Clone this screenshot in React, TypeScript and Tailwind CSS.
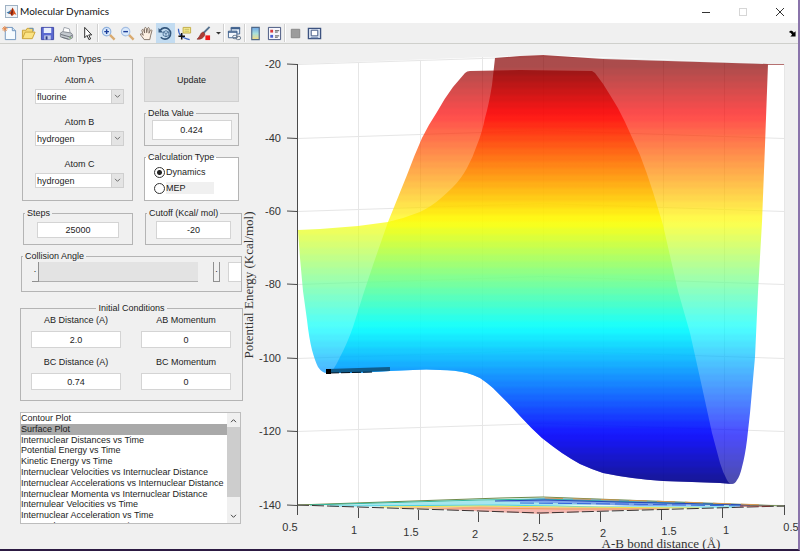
import type { ReactNode } from 'react'

const ATOMS = ['fluorine', 'hydrogen', 'chlorine', 'iodine']

const PLOT_TYPES = [
  'Contour Plot',
  'Surface Plot',
  'Internuclear Distances vs Time',
  'Potential Energy vs Time',
  'Kinetic Energy vs Time',
  'Internuclear Velocities vs Internuclear Distance',
  'Internuclear Accelerations vs Internuclear Distance',
  'Internuclear Momenta vs Internuclear Distance',
  'Internulear Velocities vs Time',
  'Internuclear Acceleration vs Time',
  'Internuclear Momenta vs Time',
]

const Z_TICKS = [
  { label: '-20', y: 64 },
  { label: '-40', y: 138 },
  { label: '-60', y: 211 },
  { label: '-80', y: 284 },
  { label: '-100', y: 358 },
  { label: '-120', y: 431 },
  { label: '-140', y: 505 },
]

const X_TICKS = [
  { label: '0.5', x: 297, y: 505, tx: 290, ty: 531 },
  { label: '1', x: 358, y: 508, tx: 354, ty: 534 },
  { label: '1.5', x: 418, y: 510, tx: 411, ty: 536 },
  { label: '2', x: 478, y: 512, tx: 475, ty: 538 },
  { label: '2.52.5', x: 539, y: 514, tx: 538, ty: 541 },
  { label: '2', x: 600, y: 512, tx: 603, ty: 537 },
  { label: '1.5', x: 661, y: 510, tx: 669, ty: 535 },
  { label: '1', x: 722, y: 508, tx: 726, ty: 534 },
  { label: '0.5', x: 784, y: 505, tx: 791, ty: 531 },
]

const GRID_X = [
  { x: 358, top: 62, bottom: 503 },
  { x: 420, top: 60, bottom: 501 },
  { x: 482, top: 57, bottom: 499 },
  { x: 543, top: 55, bottom: 497 },
  { x: 603, top: 58, bottom: 499 },
  { x: 663, top: 60, bottom: 501 },
  { x: 724, top: 62, bottom: 503 },
]

const LEVELS = 64

const channel = (v: number) => Math.round(255 * Math.min(1, Math.max(0, v)))

// jet colormap, 0 = dark blue, 1 = dark red
const jet = (v: number) =>
  `rgb(${channel(1.5 - Math.abs(4 * v - 3))},${channel(1.5 - Math.abs(4 * v - 2))},${channel(1.5 - Math.abs(4 * v - 1))})`

const BANDS = Array.from({ length: LEVELS }, (_, i) => ({
  from: (i + 0.3) / LEVELS,
  to: (i + 0.7) / LEVELS,
  color: jet(1 - (i + 0.5) / LEVELS),
}))

const FLOOR_EDGE =
  'L720 483 L692 482 L663 481 Q632 479 603 473 Q591 469 580 464 Q571 459 562 453 Q552 446 542 438 Q531 428 520 416 L507 402 L493 388 Q486 382 480 378 Q474 375 467 373 Q455 370 440 370 Q426 369 413 370 L390 371 L357 373'

const BACK_SURFACE = `M298 230 L320 229 L358 226 L388 222 Q405 218 420 212 Q432 206 440 199 Q447 193 453 187 Q461 179 467 168 Q473 157 477 145 Q482 133 485 118 Q489 104 492 85 L495 58 L520 56 L543 55 L603 59 L768 64 L765 145 L762 222 L758 292 L755 357 L750 413 L747 440 Q745 456 742 467 Q740 476 737 480 Q735 484 732 484 ${FLOOR_EDGE} L327 373 Q322 373 318 367 Q315 361 312 350 Q309 338 307 320 L303 291 L300 258 Z`

const FRONT_SURFACE = `M329 373 Q333 372 340 357 Q347 344 353 327 L364 292 L373 265 L388 222 L407 175 Q414 156 422 138 Q429 124 437 112 Q444 99 453 87 L465 73 Q467 71 470 71 L520 70 L592 71 L595 73 Q603 83 610 95 Q618 107 625 122 L640 155 Q647 173 653 192 L663 225 L678 291 L690 333 L702 387 L712 433 L720 463 Q723 473 727 480 Q729 484 732 484 ${FLOOR_EDGE} Z`

const Panel = ({
  title,
  className = '',
  legendClass = 'ml-px',
  children,
}: {
  title: string
  className?: string
  legendClass?: string
  children: ReactNode
}) => (
  <fieldset className={`min-w-0 border border-[#b4b4b4] ${className}`}>
    <legend className={`px-0.5 ${legendClass}`}>{title}</legend>
    {children}
  </fieldset>
)

const TextField = ({
  label,
  value,
  className = '',
}: {
  label: string
  value: string
  className?: string
}) => (
  <input
    type="text"
    aria-label={label}
    defaultValue={value}
    className={`block border border-[#d4d4d4] bg-white text-center ${className}`}
  />
)

const AtomSelect = ({ name, value }: { name: string; value: string }) => (
  <label className="flex flex-col gap-[3px]">
    <span className="text-center">{name}</span>
    <span className="relative block">
      <select
        defaultValue={value}
        className="block h-[15px] w-full appearance-none border border-[#d4d4d4] bg-white pl-px"
      >
        {ATOMS.map((atom) => (
          <option key={atom}>{atom}</option>
        ))}
      </select>
      <span className="pointer-events-none absolute inset-y-0 right-0 flex w-[13px] items-center justify-center border border-[#cfcfcf] bg-[#e4e4e4]">
        <svg viewBox="0 0 8 6" className="h-[5px] w-[7px]">
          <path d="M1 1l3 3 3-3" fill="none" stroke="#555" />
        </svg>
      </span>
    </span>
  </label>
)

const Condition = ({ label, value }: { label: string; value: string }) => (
  <label className="flex flex-col gap-[5px] text-center">
    {label}
    <input
      type="text"
      defaultValue={value}
      className="h-[17px] w-full border border-[#d4d4d4] bg-white text-center"
    />
  </label>
)

const Choice = ({
  label,
  checked,
  className = '',
}: {
  label: string
  checked?: boolean
  className?: string
}) => (
  <label className="flex h-3 items-center gap-px">
    <input
      type="radio"
      name="calculation"
      defaultChecked={checked}
      className="size-[11px] shrink-0 appearance-none rounded-full border border-[#333] bg-white checked:bg-[radial-gradient(circle,#222_0_2px,#fff_3px)]"
    />
    <span className={className}>{label}</span>
  </label>
)

const Tool = ({
  label,
  active,
  children,
}: {
  label: string
  active?: boolean
  children: ReactNode
}) => (
  <button
    type="button"
    aria-label={label}
    className={`flex w-[19px] shrink-0 items-center justify-center ${active ? 'bg-[#c3dcf1]' : ''}`}
  >
    <svg viewBox="0 0 16 16" className="size-[15px]" fill="none">
      {children}
    </svg>
  </button>
)

const Divider = () => (
  <span className="my-px w-0.5 shrink-0 border-l border-[#d0d0d0] bg-white" />
)

const TitleBar = () => (
  <header className="flex h-[23px] items-center bg-white pl-[5px]">
    <svg viewBox="0 0 13 13" className="size-[13px]">
      <rect x=".5" y=".5" width="12" height="12" fill="#eef3f8" stroke="#9fb2c4" />
      <path d="M1.500 7.500L4 6.500 6 4.500 5.500 9 4 9z" fill="#3a76a8" />
      <path d="M4 9L6 5.500 7.500 2.500 9 5 11.500 10 9.500 9 7 11 5.500 9z" fill="#d9531e" />
      <path d="M7.500 2.500L8 7 7 11 5.500 9z" fill="#7c1f12" />
    </svg>
    <h1 className="ml-0.5 font-[Lato,'Open_Sans',sans-serif] text-[10px] text-[#111]">
      Molecular Dynamics
    </h1>
    <div className="ml-auto flex h-full">
      <button type="button" aria-label="Minimize" className="flex w-[37px] items-center justify-center">
        <svg viewBox="0 0 10 10" className="size-2.5">
          <path d="M1 5.500h8" stroke="#333" />
        </svg>
      </button>
      <button type="button" aria-label="Maximize" className="flex w-[37px] items-center justify-center">
        <svg viewBox="0 0 10 10" className="size-2.5">
          <rect x="1.500" y="1.500" width="7" height="7" fill="none" stroke="#d6d6d6" />
        </svg>
      </button>
      <button type="button" aria-label="Close" className="flex w-[37px] items-center justify-center">
        <svg viewBox="0 0 10 10" className="size-2.5">
          <path d="M1 1l8 8M9 1l-8 8" stroke="#333" />
        </svg>
      </button>
    </div>
  </header>
)

const Toolbar = () => (
  <div className="flex h-[21px] border-b border-[#cfd0cc] bg-[#f0f0f0]">
    <Tool label="New Figure">
      <path d="M3.500 1.500h7.500l3.500 3.500v9.500h-11z" fill="#f6fbff" stroke="#6f93bd" />
      <path d="M11 1.500v3.500h3.500" stroke="#6f93bd" fill="#d3e4f4" />
      <path d="M3 0v6M0 3h6M1 1l4 4M5 1L1 5" stroke="#e98a4a" />
    </Tool>
    <Tool label="Open File">
      <path d="M1.500 13.500v-9h4l1-2h6v4" fill="#f4d774" stroke="#c9a135" />
      <path d="M1.500 13.500l3-7h10.500l-3 7z" fill="#fbe384" stroke="#c9a135" />
      <path d="M9 2.500h4v3" stroke="#5e8fc0" />
    </Tool>
    <Tool label="Save Figure">
      <path d="M1.500 1.500h13v13h-13z" fill="#5a68d0" stroke="#3f49a8" />
      <path d="M4 2h8v5.500H4z" fill="#e8eefc" />
      <path d="M4.500 10h7v4.500h-7z" fill="#c3cbe9" />
      <path d="M6 11h2v3.500H6z" fill="#2d3a84" />
    </Tool>
    <Tool label="Print Figure">
      <path d="M4 7L5.500 1.500 11 3l1 5z" fill="#fff" stroke="#9a9fa8" />
      <path d="M1.500 7.500L4 6l9 1.500 1.500 2v3L11 14.500l-9.500-3z" fill="#c4c9cf" stroke="#858a92" />
      <path d="M2 9l9 2.500L14 10M3 12l7 2" stroke="#6b7078" />
      <path d="M11 12.500h2" stroke="#6bb04a" />
    </Tool>
    <Divider />
    <Tool label="Edit Plot">
      <path d="M5 1.500v11l2.500-2.500 2 4.500 1.800-.8-2-4.200h3.200z" fill="#fff" stroke="#222" />
    </Tool>
    <Divider />
    <Tool label="Zoom In">
      <path d="M9.500 9.500l5 5" stroke="#d9aa70" strokeWidth="2.500" />
      <circle cx="6" cy="6" r="4.500" fill="#dbeafb" stroke="#8fb0dc" strokeWidth="1.200" />
      <path d="M6 3.500v5M3.500 6h5" stroke="#1d3f9a" strokeWidth="1.500" />
    </Tool>
    <Tool label="Zoom Out">
      <path d="M9.500 9.500l5 5" stroke="#d9aa70" strokeWidth="2.500" />
      <circle cx="6" cy="6" r="4.500" fill="#dbeafb" stroke="#a5bee2" strokeWidth="1.200" />
      <path d="M3.500 6h5" stroke="#1d3f9a" strokeWidth="1.500" />
    </Tool>
    <Tool label="Pan">
      <path
        d="M5.500 14.500C4 12 2 10.500 1.500 8.500c.8-.8 2 0 3 1.500L3 4.500c.5-1.300 1.700-1 2 0l1 3L5.800 2.500c.4-1.300 1.800-1.200 2 0l.4 4.700.9-4.700c.5-1.200 1.800-.9 1.800.2l-.3 5 1.500-3.200c.8-.9 1.900-.3 1.600.8l-1.400 5.200-.8 4z"
        fill="#fdf1e3"
        stroke="#746457"
        strokeWidth=".9"
      />
    </Tool>
    <Tool label="Rotate 3D" active>
      <path d="M2.500 4.500A6 6 0 1 1 3 12" stroke="#34577d" strokeWidth="1.800" />
      <path d="M.5 2v5h5z" fill="#34577d" />
      <path d="M5.500 6.500l3-1.500 3 1.500v3.500l-3 1.500-3-1.500zM5.500 6.500l3 1.500 3-1.500M8.500 8v3.500" stroke="#42688f" strokeWidth=".9" />
    </Tool>
    <Tool label="Data Cursor">
      <path d="M6.500 1.500h8v6h-8z" fill="#f7ee8e" stroke="#c1ab45" />
      <path d="M8 3.500h5M8 5.500h5" stroke="#a99b56" strokeWidth=".7" />
      <path d="M1.500 3c0 7 4 9.500 12 11.500" stroke="#3d67c6" strokeWidth="1.300" />
      <path d="M5 7.500v7M1.500 11h7" stroke="#111" strokeWidth="1.600" />
    </Tool>
    <Tool label="Brush">
      <path d="M14.500 1L8 7.500" stroke="#57728f" strokeWidth="2" />
      <path d="M8 6.500C4.500 6.500 5 11 1 14c4 .8 8-1.500 8.500-5.500z" fill="#ad3c35" stroke="#77302c" strokeWidth=".6" />
      <path d="M10 10h5v5h-5z" fill="#f01818" />
    </Tool>
    <button type="button" aria-label="Brush colors" className="flex w-2.5 items-center justify-center">
      <svg viewBox="0 0 5 4" className="h-1 w-[5px]">
        <path d="M0 1h5L2.500 3.500z" fill="#333" />
      </svg>
    </button>
    <Divider />
    <Tool label="Link Plot">
      <path d="M4.500 1.500h9v7h-9z" fill="#e7f0fa" stroke="#40618d" />
      <path d="M4 2.500h10" stroke="#40618d" strokeWidth="2" />
      <path d="M1.500 5.500h9v7h-9z" fill="#f4f8fd" stroke="#40618d" />
      <path d="M1 6.500h10" stroke="#40618d" strokeWidth="1.500" />
      <rect x="6" y="10" width="5" height="3.500" rx="1.700" stroke="#66788c" />
      <rect x="9.500" y="11" width="5" height="3.500" rx="1.700" stroke="#66788c" />
    </Tool>
    <Divider />
    <Tool label="Insert Colorbar">
      <defs>
        <linearGradient id="colorbar" x2="0" y2="1">
          <stop stopColor="#6fa6e6" />
          <stop offset=".5" stopColor="#a9e0dc" />
          <stop offset="1" stopColor="#f7dc7f" />
        </linearGradient>
      </defs>
      <path d="M4 1.500h8v13h-8z" fill="url(#colorbar)" stroke="#4f6888" strokeWidth="1.200" />
    </Tool>
    <Tool label="Insert Legend">
      <path d="M1.500 1.500h13v13h-13z" fill="#f6f6fc" stroke="#41517c" />
      <path d="M3.500 4h3v3h-3z" fill="#d8383a" />
      <path d="M3.500 9.500h3v3h-3z" fill="#4a5fd0" />
      <path d="M8.500 5h4.500M8.500 6.500h3M8.500 10.500h4.500M8.500 12h3" stroke="#555" />
    </Tool>
    <Divider />
    <Tool label="Hide Plot Tools">
      <path d="M3.500 3.500h9v9h-9z" fill="#9c9c9c" stroke="#858585" />
    </Tool>
    <Tool label="Show Plot Tools">
      <path d="M1.500 2.500h13v11h-13z" fill="#dce6f4" stroke="#3d5380" strokeWidth="1.400" />
      <path d="M4.500 4.500h7v6h-7z" fill="#fff" stroke="#3d5380" />
      <path d="M4 12.500h8" stroke="#6c84ad" />
    </Tool>
    <button type="button" aria-label="Dock Figure" className="mr-px ml-auto flex w-2.5 items-center justify-center">
      <svg viewBox="0 0 8 8" className="size-[7px]">
        <path d="M0 2.500C1.500 0 4 .5 5.500 3L7.500 1.500V7.500H1.500L3.500 5.500C2.500 3.500 1.500 3 0 2.500z" fill="#000" />
      </svg>
    </button>
  </div>
)

const Controls = () => (
  <aside className="w-[243px] shrink-0 pt-[9px] pl-5 text-[9px] leading-3 text-[#1c1c1c]">
    <div className="flex gap-[11px] pl-0.5">
      <Panel
        title="Atom Types"
        className="w-[111px]"
        legendClass="mx-auto"
      >
        <div className="flex flex-col gap-3 pt-[9px] pr-2 pb-[11px] pl-3">
          <AtomSelect name="Atom A" value="fluorine" />
          <AtomSelect name="Atom B" value="hydrogen" />
          <AtomSelect name="Atom C" value="hydrogen" />
        </div>
      </Panel>
      <div className="flex w-[95px] flex-col gap-[5px] pt-1">
        <button type="button" className="h-[45px] border border-[#d0d0d0] bg-[#e1e1e1]">
          Update
        </button>
        <Panel title="Delta Value">
          <TextField label="Delta Value" value="0.424" className="mx-auto mt-px mb-[5px] h-5 w-20" />
        </Panel>
        <Panel title="Calculation Type" className="bg-white">
          <div className="flex flex-col gap-1 pt-[3px] pb-1.5 pl-[9px]">
            <Choice label="Dynamics" checked />
            <Choice label="MEP" className="w-12 bg-[#f0f0f0]" />
          </div>
        </Panel>
      </div>
    </div>

    <div className="mt-1.5 flex gap-3 pl-[3px]">
      <Panel title="Steps" className="w-[110px]">
        <TextField label="Steps" value="25000" className="mx-auto mt-[3px] mb-1.5 h-4 w-[82px]" />
      </Panel>
      <Panel title="Cutoff (Kcal/ mol)" className="w-[97px]">
        <TextField label="Cutoff" value="-20" className="mx-auto mt-0.5 mb-[5px] h-[18px] w-[75px]" />
      </Panel>
    </div>

    <Panel title="Collision Angle" className="mt-[5px] ml-px w-[221px]">
      <div className="flex h-5 pl-2.5">
        <button type="button" aria-label="Decrease angle" className="w-[7px] border-r border-b border-[#909090] leading-none">
          ·
        </button>
        <input
          type="range"
          aria-label="Collision Angle"
          min={0}
          max={180}
          defaultValue={180}
          className="h-full min-w-0 flex-1 appearance-none border-b border-[#b0b0b0] bg-[#e3e3e3] [&::-webkit-slider-thumb]:h-5 [&::-webkit-slider-thumb]:w-[15px] [&::-webkit-slider-thumb]:appearance-none [&::-webkit-slider-thumb]:bg-[#f0f0f0]"
        />
        <button type="button" aria-label="Increase angle" className="w-[7px] border-x border-b border-[#909090] leading-none">
          ·
        </button>
        <input type="text" aria-label="Angle value" className="ml-2 w-[13px] border border-r-0 border-[#d4d4d4] bg-white" />
      </div>
      <div className="h-[9px]" />
    </Panel>

    <Panel title="Initial Conditions" className="mt-2.5" legendClass="mx-auto">
      <div className="grid grid-cols-2 gap-x-5 gap-y-2 pr-[11px] pb-2.5 pl-2.5">
        <Condition label="AB Distance (A)" value="2.0" />
        <Condition label="AB Momentum" value="0" />
        <Condition label="BC Distance (A)" value="0.74" />
        <Condition label="BC Momentum" value="0" />
      </div>
    </Panel>

    <div className="mt-[11px] mr-0.5 flex h-28 border border-[#bdbdbd] bg-white">
      <select
        size={10}
        aria-label="Plot type"
        defaultValue="Surface Plot"
        className="h-full min-w-0 flex-1 appearance-none overflow-hidden leading-[1.2]"
      >
        {PLOT_TYPES.map((plot) => (
          <option
            key={plot}
            className="p-0 leading-[1.2] text-[#1c1c1c] checked:bg-[linear-gradient(#a9a9a9,#a9a9a9)]"
          >
            {plot}
          </option>
        ))}
      </select>
      <div className="flex w-[13px] flex-col bg-[#f0f0f0]">
        <button type="button" aria-label="Scroll up" className="flex h-[14px] items-center justify-center">
          <svg viewBox="0 0 8 6" className="h-[5px] w-[7px]">
            <path d="M1 5l3-3 3 3" fill="none" stroke="#444" strokeWidth="1.200" />
          </svg>
        </button>
        <span className="h-[70px] bg-[#cdcdcd]" />
        <button type="button" aria-label="Scroll down" className="mt-auto flex h-[14px] items-center justify-center">
          <svg viewBox="0 0 8 6" className="h-[5px] w-[7px]">
            <path d="M1 1l3 3 3-3" fill="none" stroke="#444" strokeWidth="1.200" />
          </svg>
        </button>
      </div>
    </div>
  </aside>
)

const SurfacePlot = () => (
  <svg
    viewBox="243 44 555 505"
    role="img"
    aria-label="Potential energy surface"
    className="h-auto min-w-0 flex-1 self-start overflow-visible"
  >
    <defs>
      <linearGradient id="energy" gradientUnits="userSpaceOnUse" x1="0" y1="62" x2="0" y2="487">
        {BANDS.flatMap((band) => [
          <stop key={band.from} offset={band.from} stopColor={band.color} />,
          <stop key={band.to} offset={band.to} stopColor={band.color} />,
        ])}
      </linearGradient>
    </defs>

    <path d="M297 64L543 55L784 64V506L540 514L297 505z" fill="#fff" />

    <g stroke="#e6e6e6" fill="none">
      {GRID_X.map((line) => (
        <path key={line.x} d={`M${line.x}.5 ${line.top}V${line.bottom}`} />
      ))}
      {Z_TICKS.map((tick) => (
        <path key={tick.y} d={`M297 ${tick.y}.5L543 ${tick.y - 8}.5L784 ${tick.y}.5`} />
      ))}
      <path d="M784.500 64V505" />
    </g>

    {/* contour map projected on the floor */}
    <g>
      <path d="M297 505L500 498L543 497L784 506L540 514z" fill="#e9f6f4" />
      <path d="M340 505L500 500L640 503L520 507z" fill="#a5e6ee" />
      <path d="M430 509L480 506L540 507L670 508L540 514z" fill="#f5b5ae" />
      <path d="M495 501L545 498L620 500L765 505L640 506z" fill="#7fa5ea" />
      <g fill="none" strokeWidth="1">
        <path d="M297 505L500 498L543 497L784 506" stroke="#6d8a4a" />
        <path d="M310 505L480 500L540 499L770 506" stroke="#33b8a0" />
        <path d="M495 501L545 500L620 502L750 505" stroke="#2744b8" />
        <path d="M520 503L620 504L745 506" stroke="#3565dd" strokeDasharray="14 5" />
        <path d="M330 506L500 505L600 507L735 507" stroke="#4bd3e6" />
        <path d="M380 507L480 506L560 507L700 508" stroke="#f0e04e" />
        <path d="M400 508L480 508L560 509L670 509" stroke="#ef9c52" />
        <path d="M545 498L650 501L765 505" stroke="#d9974e" strokeDasharray="18 10" />
        <path d="M297 505L540 513L784 506" stroke="#3a3232" strokeDasharray="12 3" />
        <path d="M740 506L770 506" stroke="#a33" />
      </g>
    </g>

    <path d={BACK_SURFACE} fill="url(#energy)" fillOpacity=".7" />
    <path d={FRONT_SURFACE} fill="url(#energy)" fillOpacity=".7" />

    {/* trajectory */}
    <path d="M328 371L390 369" stroke="#0f5c8c" strokeWidth="4" />
    <path d="M330 373L373 372" stroke="#06121c" strokeDasharray="9 2" />
    <path d="M326 369h5v5h-5z" fill="#000" />

    <g stroke="#4a4a4a">
      <path d="M297.500 64V505" />
      {Z_TICKS.map((tick) => (
        <path key={tick.y} d={`M287 ${tick.y}L297 ${tick.y}.5`} />
      ))}
      {X_TICKS.map((tick) => (
        <path key={tick.x} d={`M${tick.x}.5 ${tick.y}v10`} />
      ))}
      <path d="M768 64.500H784" stroke="#b57070" />
    </g>

    <g fill="#333" fontSize="11" fontFamily="'Liberation Sans', Arial, sans-serif">
      {Z_TICKS.map((tick) => (
        <text key={tick.y} x="281" y={tick.y + 4} textAnchor="end">
          {tick.label}
        </text>
      ))}
      {X_TICKS.map((tick) => (
        <text key={tick.x} x={tick.tx} y={tick.ty} textAnchor="middle">
          {tick.label}
        </text>
      ))}
    </g>

    <g fill="#333" fontSize="13" fontFamily="'Liberation Serif', 'Times New Roman', serif" textAnchor="middle">
      <text x="661" y="548">
        A-B bond distance (Å)
      </text>
      <text transform="translate(253 285) rotate(-90)">Potential Energy (Kcal/mol)</text>
    </g>
  </svg>
)

const App = () => (
  <div className="flex min-h-screen flex-col overflow-hidden border-r-2 border-b-2 border-r-[#8a74ab] border-b-[#2c1a42] bg-[#f0f0f0] font-['Liberation_Sans',Arial,sans-serif]">
    <TitleBar />
    <Toolbar />
    <main className="flex flex-1">
      <Controls />
      <SurfacePlot />
    </main>
  </div>
)

export default App
